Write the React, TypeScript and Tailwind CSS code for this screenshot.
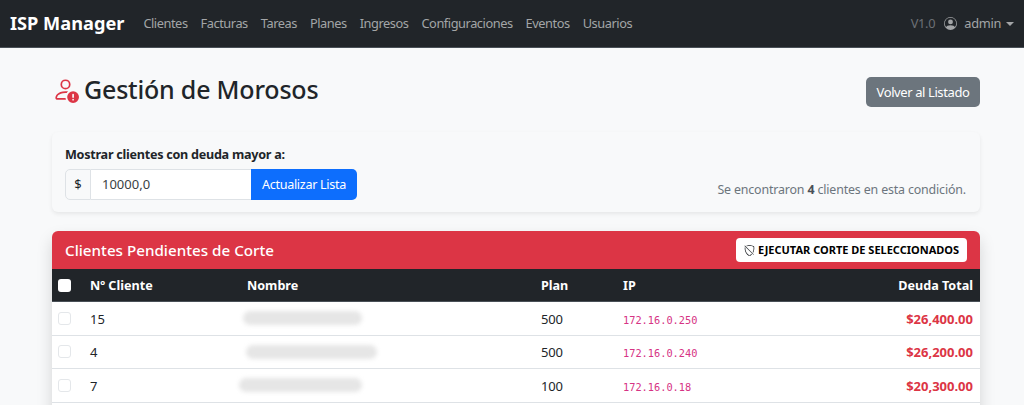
import { BsPersonExclamation, BsPersonCircle, BsShieldSlash } from "react-icons/bs";

const nav = ["Clientes", "Facturas", "Tareas", "Planes", "Ingresos", "Configuraciones", "Eventos", "Usuarios"];
const rows = [
  { id: "15", plan: "500", ip: "172.16.0.250", debt: "$26,400.00", blur: "ml-[-4px] w-[119px]" },
  { id: "4", plan: "500", ip: "172.16.0.240", debt: "$26,200.00", blur: "ml-[-1px] w-[131px]" },
  { id: "7", plan: "100", ip: "172.16.0.18", debt: "$20,300.00", blur: "ml-[-8px] w-[123px]" },
];

export default function App() {
  return (
    <div className="h-screen overflow-hidden bg-[#f8f9fa] text-[#212529] font-['Noto_Sans','Open_Sans',sans-serif] text-[13.5px]">
      <nav className="h-12 bg-[#212529] border-b border-[#495057] flex items-center pl-[10px] pr-[10px]">
        <span className="text-white font-bold text-[18.2px] mr-[19px]">ISP Manager</span>
        <div className="flex gap-[13px] text-[12.8px] tracking-[-0.45px] text-[#a3a5a7]">
          {nav.map((n) => (
            <span key={n}>{n}</span>
          ))}
        </div>
        <div className="ml-auto flex items-center text-[12.8px] tracking-[-0.3px] text-[#a3a5a7]">
          <span className="text-[#6c7075] mr-[9px]">V1.0</span>
          <BsPersonCircle className="w-[13px] h-[13px] mr-[7px]" />
          <span>admin</span>
          <span className="ml-[5px] w-0 h-0 border-x-[4px] border-x-transparent border-t-[4px] border-t-[#a3a5a7]" />
        </div>
      </nav>

      <main className="pl-[52px] pr-[44px]">
        <div className="flex items-center justify-between pt-[4px] h-[84px]">
          <h1 className="flex items-center text-[25px] tracking-[-0.2px] font-medium leading-none mt-[-5px]">
            <BsPersonExclamation className="text-[#dc3545] w-[27px] h-[27px] mr-[5px]" />
            Gestión de Morosos
          </h1>
          <button className="h-[30px] w-[114px] rounded-[5px] bg-[#6c757d] text-white text-[13px] tracking-[-0.4px] pt-[2px]">Volver al Listado</button>
        </div>

        <section className="h-[80px] rounded-md bg-[#f8f9fa] shadow-[0_2px_4px_rgba(0,0,0,0.075)] flex justify-between pl-[13px] pr-[14px] pt-[14px]">
          <div>
            <div className="font-bold text-[12.6px] tracking-[-0.26px] leading-[17px] mb-[6px]">Mostrar clientes con deuda mayor a:</div>
            <div className="flex h-[31px] w-[292px] text-[13px]">
              <span className="w-[26px] flex items-center justify-center bg-[#f8f9fa] border border-[#dee2e6] rounded-l-[5px]">$</span>
              <span className="w-[160px] bg-white flex items-center pl-[11px] border-y border-[#dee2e6] text-[#3a3f44]">10000,0</span>
              <button className="flex-1 bg-[#0d6efd] text-white rounded-r-[5px] text-[12.6px] tracking-[-0.3px] pt-[2px]">Actualizar Lista</button>
            </div>
          </div>
          <p className="self-end mb-[12px] text-[#6c757d] text-[12.4px] tracking-[-0.15px]">
            Se encontraron <b className="text-[#495057]">4</b> clientes en esta condición.
          </p>
        </section>

        <section className="mt-[19px] min-h-[200px] rounded-t-md overflow-hidden bg-white shadow-[0_8px_16px_rgba(0,0,0,0.15)]">
          <header className="h-[38px] bg-[#dc3545] flex items-center justify-between pl-[13px] pr-[13px]">
            <h2 className="text-white text-[15.2px] font-medium">Clientes Pendientes de Corte</h2>
            <button className="h-[24px] w-[231px] bg-white rounded-[4px] flex items-center justify-center gap-[3px] text-[11px] font-bold text-black">
              <BsShieldSlash className="w-[11px] h-[11px] text-[#212529]" />
              EJECUTAR CORTE DE SELECCIONADOS
            </button>
          </header>
          <table className="w-full table-fixed text-[13px]">
            <colgroup>
              <col className="w-[32px]" />
              <col className="w-[157px]" />
              <col className="w-[294px]" />
              <col className="w-[82px]" />
              <col className="w-[190px]" />
              <col />
            </colgroup>
            <thead>
              <tr className="h-[32.5px] bg-[#212529] text-white font-bold text-left text-[12.6px] border-b border-[#495057]">
                <th className="pl-[6px]">
                  <span className="block w-[13px] h-[13px] rounded-[3px] bg-white" />
                </th>
                <th className="pl-[6px] pt-[2px]">Nº Cliente</th>
                <th className="pl-[6px] pt-[2px]">Nombre</th>
                <th className="pl-[6px] pt-[2px]">Plan</th>
                <th className="pl-[6px] pt-[2px]">IP</th>
                <th className="pr-[7px] pt-[2px] text-right">Deuda Total</th>
              </tr>
            </thead>
            <tbody>
              {rows.map((r) => (
                <tr key={r.id} className="h-[33.5px] border-b border-[#dee2e6]">
                  <td className="pl-[6px]">
                    <span className="block w-[13px] h-[13px] rounded-[3px] bg-white border border-[#e4e7ea]" />
                  </td>
                  <td className="pl-[6px] pt-[2px]">{r.id}</td>
                  <td className="pl-[6px]">
                    <div className={`h-[14px] rounded-full bg-[#e6e6e6] blur-[2px] ${r.blur}`} />
                  </td>
                  <td className="pl-[6px] pt-[2px] tracking-[-0.2px]">{r.plan}</td>
                  <td className="pl-[6px] pt-[4px] font-['DejaVu_Sans_Mono',monospace] text-[10.3px] text-[#d63384]">{r.ip}</td>
                  <td className="pr-[7px] pt-[2px] text-right font-bold text-[#dc3545]">{r.debt}</td>
                </tr>
              ))}
            </tbody>
          </table>
        </section>
      </main>
    </div>
  );
}
